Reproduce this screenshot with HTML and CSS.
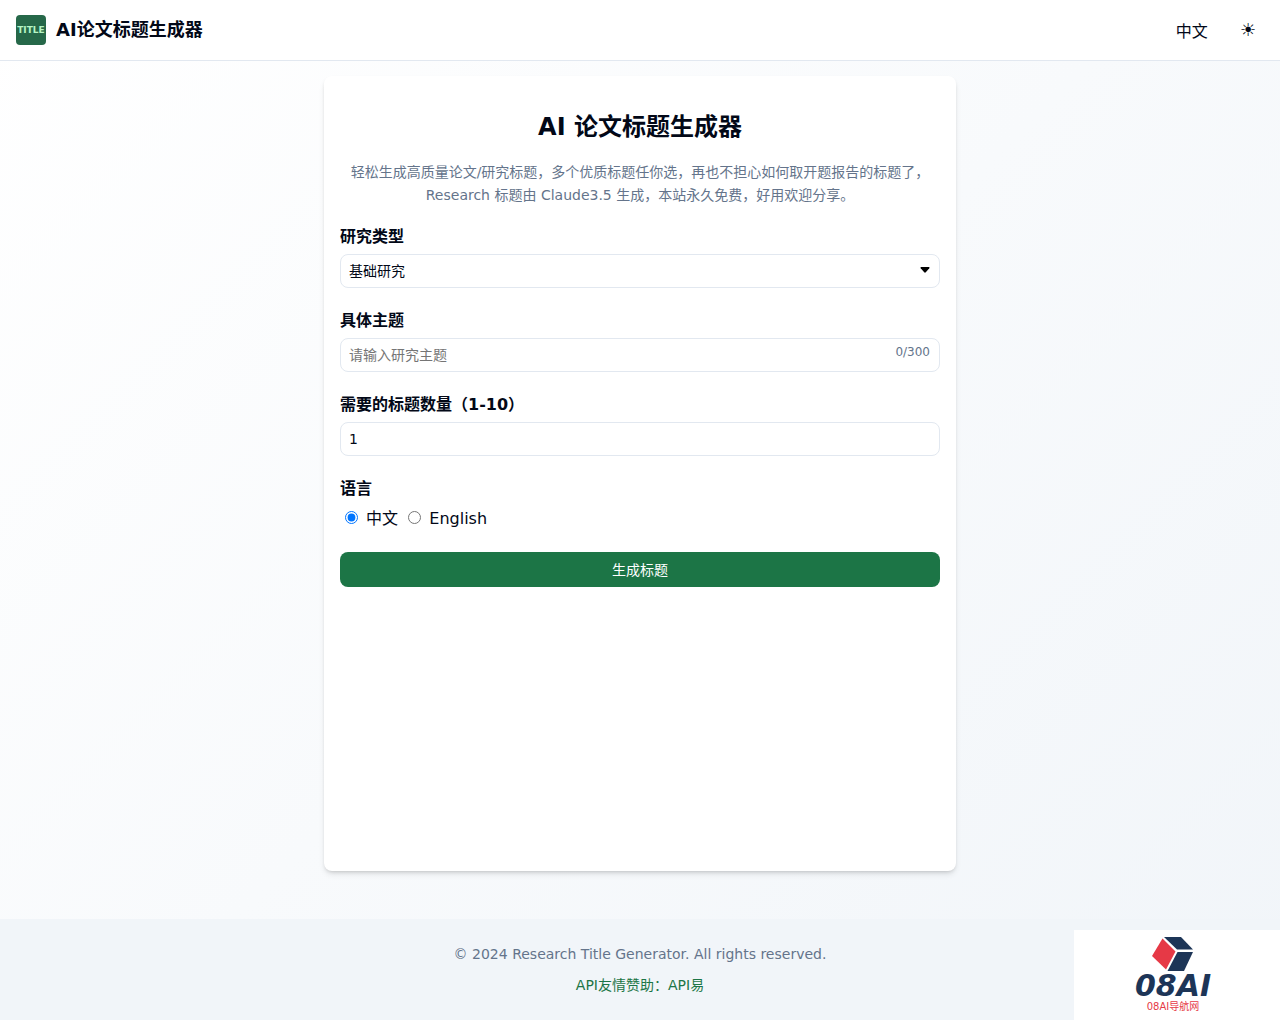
FILE: index.html
```html
<!DOCTYPE html>
<html lang="zh">
<head>
<meta charset="utf-8">
<meta name="viewport" content="width=device-width, initial-scale=1">
<title>AI论文标题生成器</title>
<link rel="stylesheet" href="styles.css">
</head>
<body>
<header class="site-header">
  <div class="brand">
    <span class="brand-logo">TITLE</span>
    <span class="brand-name">AI论文标题生成器</span>
  </div>
  <nav class="header-actions">
    <button type="button" class="header-button">中文</button>
    <button type="button" class="header-button theme-button" aria-label="切换主题">☀</button>
  </nav>
</header>
<main class="page">
  <section class="card">
    <h1 class="title">AI 论文标题生成器</h1>
    <p class="intro">轻松生成高质量论文/研究标题，多个优质标题任你选，再也不担心如何取开题报告的标题了，Research 标题由 Claude3.5 生成，本站永久免费，好用欢迎分享。</p>
    <form class="form">
      <div class="field">
        <label class="label" for="type">研究类型</label>
        <div class="control">
          <select class="input" id="type"><option>基础研究</option></select>
          <svg class="arrow" viewBox="0 0 10 6" aria-hidden="true"><path d="M1 0H9Q10 0.200 9.300 1.200L5.800 5.300Q5 6 4.200 5.300L0.700 1.200Q0 0.200 1 0Z"/></svg>
        </div>
      </div>
      <div class="field">
        <label class="label" for="topic">具体主题</label>
        <div class="control">
          <input class="input" id="topic" type="text" maxlength="300" placeholder="请输入研究主题">
          <span class="counter">0/300</span>
        </div>
      </div>
      <div class="field">
        <label class="label" for="count">需要的标题数量（1-10）</label>
        <input class="input" id="count" type="number" min="1" max="10" value="1">
      </div>
      <fieldset class="field">
        <legend class="label">语言</legend>
        <div class="radios">
          <input type="radio" name="lang" id="zh" checked>
          <label for="zh">中文</label>
          <input type="radio" name="lang" id="en">
          <label for="en">English</label>
        </div>
      </fieldset>
      <button type="button" class="submit">生成标题</button>
    </form>
  </section>
</main>
<footer class="footer">
  <p class="footer-line">© 2024 Research Title Generator. All rights reserved.</p>
  <p class="footer-line"><a class="footer-link" href="#">API友情赞助：API易</a></p>
</footer>
<a class="badge" href="#">
  <svg class="badge-cube" viewBox="0 0 42 34" aria-hidden="true">
    <path fill="#1d3557" d="M12 0H29L41 12.500H25Z"/>
    <path fill="#e63946" d="M10.500 1.500L23.500 14.500L14 32.500L0 19Z"/>
    <path fill="#1d3557" d="M25.500 15H41L32 34H15.500Z"/>
  </svg>
  <span class="badge-name">08AI</span>
  <span class="badge-caption">08AI导航网</span>
</a>
</body>
</html>
```
FILE: styles.css
```css
* {
  box-sizing: border-box;
}

body {
  margin: 0;
  min-height: 100vh;
  display: flex;
  flex-direction: column;
  font: 16px/26px "DejaVu Sans", "Noto Sans CJK SC", sans-serif;
  color: #020817;
  background: linear-gradient(135deg, #ffffff, #f1f5f9);
}

.site-header {
  display: flex;
  justify-content: space-between;
  align-items: center;
  height: 61px;
  padding: 0 16px;
  background: #ffffff;
  border-bottom: 1px solid #e2e8f0;
}

.brand {
  display: flex;
  align-items: center;
  gap: 10px;
}

.brand-logo {
  display: grid;
  place-items: center;
  width: 30px;
  height: 30px;
  border-radius: 4px;
  background: #266849;
  color: #b5f5c5;
  font-size: 9px;
  font-weight: bold;
}

.brand-name {
  font-size: 18px;
  font-weight: bold;
}

.header-actions {
  display: flex;
  align-items: center;
  gap: 16px;
}

.header-button {
  padding: 12px 8px 8px;
  border: 0;
  background: none;
  color: inherit;
  font: inherit;
}

.theme-button {
  padding: 8px;
  font-size: 18px;
}

.page {
  flex: 1;
  display: flex;
  justify-content: center;
  padding: 15px 16px 48px;
}

.card {
  width: 100%;
  max-width: 632px;
  padding: 32px 16px;
  border-radius: 8px;
  background: #ffffff;
  box-shadow: 0 4px 6px -1px rgba(0, 0, 0, 0.1), 0 2px 4px -2px rgba(0, 0, 0, 0.2);
}

.title {
  margin: 0 0 15px;
  font-size: 24px;
  line-height: 38px;
  text-align: center;
}

.intro {
  margin: 0 0 17px;
  font-size: 14px;
  line-height: 23px;
  color: #64748b;
  text-align: center;
}

.form {
  display: flex;
  flex-direction: column;
  gap: 20px;
}

.field {
  margin: 0;
  padding: 0;
  border: 0;
}

.label {
  display: block;
  margin-bottom: 4px;
  padding: 0;
  font-weight: bold;
}

.control {
  position: relative;
}

.input {
  display: block;
  width: 100%;
  height: 34px;
  padding: 0 8px;
  border: 1px solid #e2e8f0;
  border-radius: 8px;
  background: #ffffff;
  color: inherit;
  font: inherit;
  font-size: 14px;
  appearance: none;
}

.arrow {
  position: absolute;
  right: 10px;
  top: 13px;
  width: 10px;
  height: 6px;
  pointer-events: none;
}

.counter {
  position: absolute;
  right: 10px;
  top: 4px;
  font-size: 12px;
  line-height: 20px;
  color: #64748b;
}

.submit {
  height: 35px;
  border: 0;
  border-radius: 8px;
  background: #1c7546;
  color: #ffffff;
  font: inherit;
  font-size: 14px;
}

.footer {
  padding: 24px 16px 23px;
  background: #f1f5f9;
  font-size: 14px;
  line-height: 23px;
  color: #64748b;
  text-align: center;
}

.footer-line {
  margin: 0 0 8px;
}

.footer-line:last-child {
  margin-bottom: 0;
}

.footer-link {
  color: #1c7546;
  text-decoration: none;
}

.badge {
  position: fixed;
  right: 0;
  bottom: 0;
  display: flex;
  flex-direction: column;
  align-items: center;
  width: 206px;
  height: 90px;
  padding-top: 7px;
  padding-right: 8px;
  background: #ffffff;
  text-decoration: none;
}

.badge-cube {
  width: 42px;
  height: 34px;
}

.badge-name {
  font-size: 30px;
  font-weight: bold;
  font-style: italic;
  line-height: 30px;
  color: #1d3557;
}

.badge-caption {
  font-size: 10px;
  line-height: 12px;
  color: #e63946;
}
```
